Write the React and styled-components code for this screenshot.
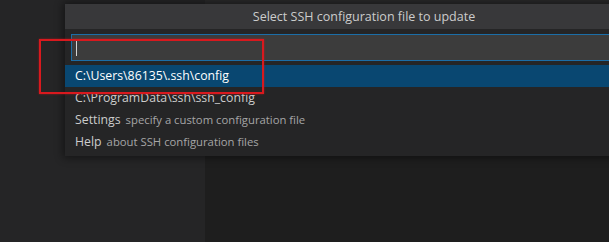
import React from "react";
import styled, { createGlobalStyle } from "styled-components";

const GlobalStyle = createGlobalStyle`
  html, body {
    margin: 0;
    padding: 0;
    background: #1e1e1e;
  }
  body {
    font-family: "Open Sans", "Noto Sans", sans-serif;
    -webkit-font-smoothing: antialiased;
  }
`;

const Workbench = styled.div`
  position: relative;
  display: flex;
  width: 609px;
  height: 242px;
  overflow: hidden;
`;

const Sidebar = styled.div`
  width: 205px;
  background: #252526;
`;

const Editor = styled.div`
  flex: 1;
  background: #1e1e1e;
  border-top: 4px solid #2a2a2b;
`;

const QuickPick = styled.div`
  position: absolute;
  top: 4px;
  left: 65px;
  width: 598px;
  background: #252526;
  box-shadow: 0 0 8px 2px rgba(0, 0, 0, 0.45);
  padding-bottom: 3px;
`;

const Title = styled.div`
  height: 25px;
  line-height: 25px;
  background: #38383a;
  color: #cccccc;
  font-size: 12.5px;
  text-align: center;
`;

const InputWrap = styled.div`
  padding: 5px 6px 4px;
`;

const Input = styled.div`
  display: flex;
  align-items: center;
  height: 25px;
  padding-left: 4px;
  background: #3c3c3c;
  border: 1px solid #1b6ea8;
`;

const Caret = styled.span`
  width: 1px;
  height: 17px;
  background: #d4d4d4;
`;

const List = styled.div`
  display: flex;
  flex-direction: column;
`;

const Row = styled.div`
  display: flex;
  align-items: baseline;
  gap: 5px;
  height: 22px;
  line-height: 22px;
  padding-left: 10px;
  font-size: 12.3px;
  color: ${(p) => (p.$selected ? "#ffffff" : "#cccccc")};
  background: ${(p) => (p.$selected ? "#094771" : "transparent")};
`;

const Label = styled.span`
  white-space: nowrap;
`;

const Description = styled.span`
  font-size: 11.3px;
  color: #a6a6a6;
  white-space: nowrap;
`;

const Annotation = styled.div`
  position: absolute;
  left: 39px;
  top: 39px;
  width: 221px;
  height: 51px;
  border: 2px solid #d8191e;
  box-shadow: 0 0 2px rgba(216, 25, 30, 0.6);
  pointer-events: none;
`;

const items = [
  { label: "C:\\Users\\86135\\.ssh\\config", selected: true },
  { label: "C:\\ProgramData\\ssh\\ssh_config" },
  { label: "Settings", description: "specify a custom configuration file" },
  { label: "Help", description: "about SSH configuration files" },
];

export default function App() {
  return (
    <>
      <GlobalStyle />
      <Workbench>
        <Sidebar />
        <Editor />
        <QuickPick>
          <Title>Select SSH configuration file to update</Title>
          <InputWrap>
            <Input>
              <Caret />
            </Input>
          </InputWrap>
          <List>
            {items.map((item) => (
              <Row key={item.label} $selected={item.selected}>
                <Label>{item.label}</Label>
                {item.description && <Description>{item.description}</Description>}
              </Row>
            ))}
          </List>
        </QuickPick>
        <Annotation />
      </Workbench>
    </>
  );
}
